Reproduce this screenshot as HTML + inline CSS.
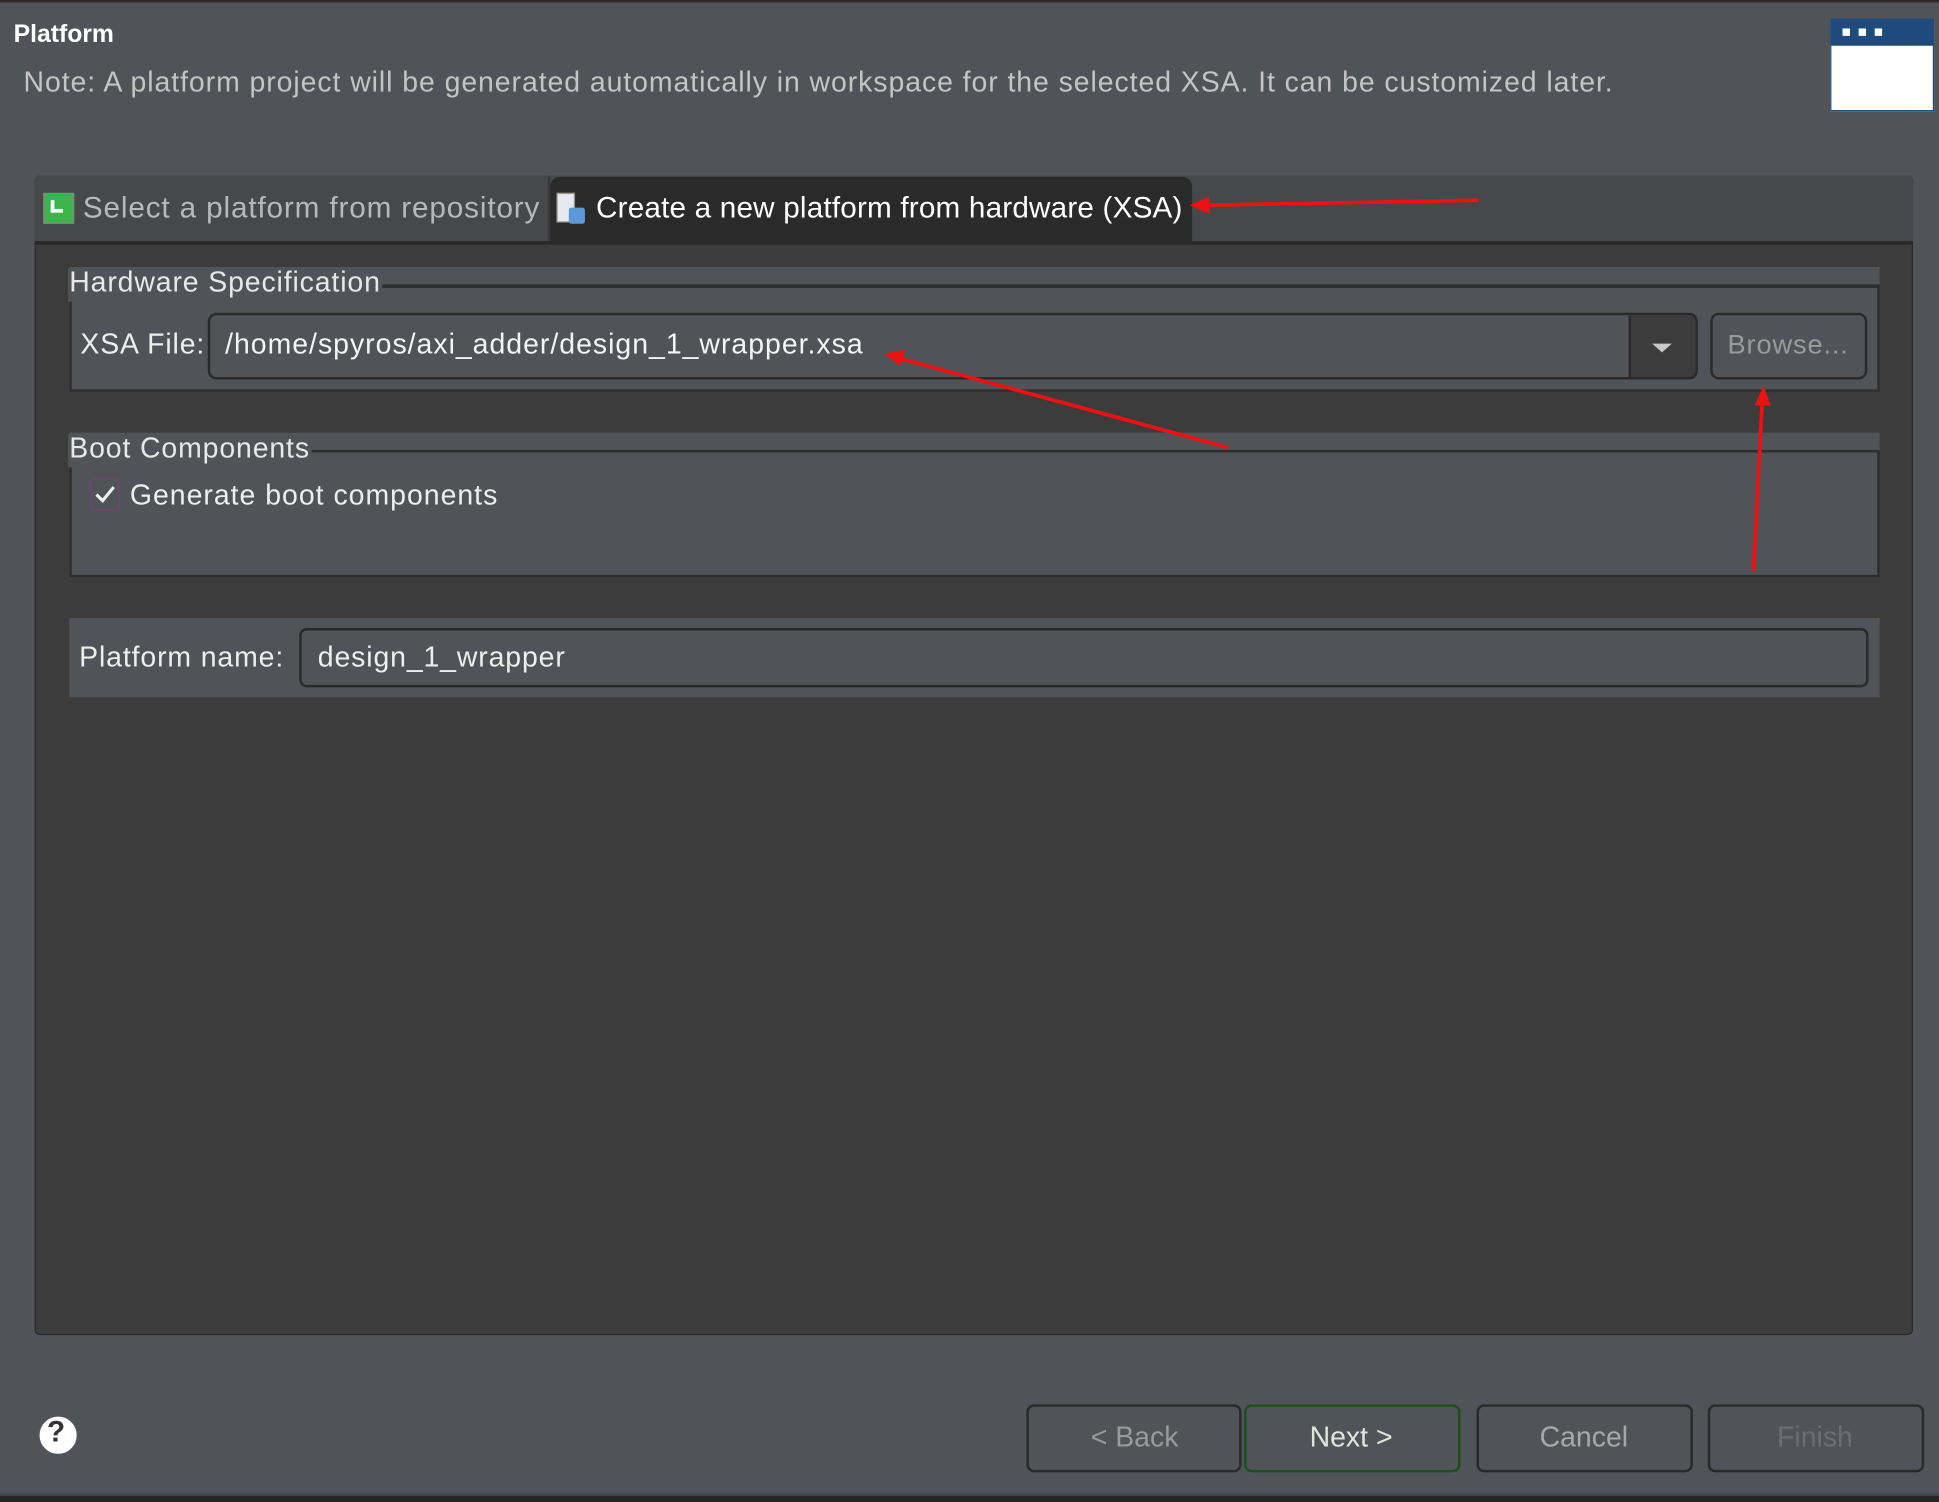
<!DOCTYPE html>
<html><head><meta charset="utf-8"><style>
html,body{margin:0;padding:0;width:1939px;height:1502px;overflow:hidden;background:#505458;}
#w{position:absolute;left:0;top:0;width:1568px;height:1215px;transform:scale(1.23661,1.2362);transform-origin:0 0;background:#505458;font-family:"Liberation Sans",sans-serif;}
.a{position:absolute;}
.t{position:absolute;white-space:nowrap;line-height:1;letter-spacing:0.7px;}
</style></head><body><div id="w">
<div class="a" style="left:0;top:0;width:1568px;height:2px;background:#2b2b2b"></div>
<div class="t" style="left:11px;top:18px;font-size:20px;font-weight:bold;color:#fff;letter-spacing:0">Platform</div>
<div class="t" style="left:19px;top:55px;font-size:23px;color:#c4c4c4;letter-spacing:0.75px">Note: A platform project will be generated automatically in workspace for the selected XSA. It can be customized later.</div>
<div class="a" style="left:1480px;top:15px;width:84px;height:75px;background:#fff;border:1px solid #1e4a7c;box-sizing:border-box"></div>
<div class="a" style="left:1480px;top:15px;width:84px;height:22px;background:#1e4a7c"></div>
<div class="a" style="left:1490px;top:23px;width:6px;height:6px;background:#fff"></div>
<div class="a" style="left:1503px;top:23px;width:6px;height:6px;background:#fff"></div>
<div class="a" style="left:1516px;top:23px;width:6px;height:6px;background:#fff"></div>

<div class="a" style="left:28px;top:142px;width:1519px;height:938px;background:#3c3c3c;border:1px solid #2a2a2a;box-sizing:border-box;border-radius:4px"></div>
<div class="a" style="left:28px;top:142px;width:1519px;height:53px;background:#46484b;border-radius:4px 4px 0 0"></div>
<div class="a" style="left:443px;top:142px;width:2px;height:53px;background:#3a3a3a"></div>
<div class="a" style="left:445px;top:143px;width:519px;height:55px;background:#2a2a2a;border-radius:8px 8px 0 0"></div>
<div class="a" style="left:28px;top:195px;width:1519px;height:3px;background:#2a2a2a"></div>
<div class="a" style="left:35px;top:156px;width:25px;height:25px;background:#39b54a;border:1px solid #888;box-sizing:border-box"></div>
<div class="a" style="left:41px;top:162px;width:10px;height:10px;border-left:3px solid #fff;border-bottom:3px solid #fff;box-sizing:border-box"></div>
<div class="t" style="left:67px;top:157px;font-size:24px;color:#b8b8b8">Select a platform from repository</div>
<div class="a" style="left:450px;top:156px;width:13px;height:22px;background:#e8e8f0;border:1px solid #998"></div>
<div class="a" style="left:460px;top:168px;width:13px;height:13px;background:#5a9ad8;border-radius:2px"></div>
<div class="t" style="left:482px;top:157px;font-size:24px;color:#fff;letter-spacing:0.15px">Create a new platform from hardware (XSA)</div>

<div class="a" style="left:56px;top:216px;width:1464px;height:101px;background:#505458"></div>
<div class="a" style="left:56px;top:230px;width:1464px;height:87px;border:2px solid #2e2e2e;border-top:3px solid #2e2e2e;box-sizing:border-box"></div>
<div class="t" style="left:55px;top:217px;font-size:23px;color:#e8e8e8;background:#505458;padding:0 1px 4px 1px">Hardware Specification</div>
<div class="t" style="left:65px;top:267px;font-size:23px;color:#eee">XSA File:</div>
<div class="a" style="left:168px;top:253px;width:1205px;height:54px;border:2px solid #2a2a2a;border-radius:7px;box-sizing:border-box;background:#505458;overflow:hidden">
 <div class="a" style="right:0;top:0;width:52px;height:50px;background:#3c3c3c;border-left:2px solid #2a2a2a"></div>
 <div class="a" style="right:19px;top:23px;width:0;height:0;border-left:8px solid transparent;border-right:8px solid transparent;border-top:7px solid #c8c8c8"></div>
</div>
<div class="t" style="left:182px;top:267px;font-size:23px;color:#f4f4f4;letter-spacing:0.8px">/home/spyros/axi_adder/design_1_wrapper.xsa</div>
<div class="a" style="left:1383px;top:253px;width:127px;height:54px;border:2px solid #2a2a2a;border-radius:7px;box-sizing:border-box;background:#505458"></div>
<div class="t" style="left:1397px;top:268px;font-size:22px;color:#9a9a9a">Browse...</div>

<div class="a" style="left:56px;top:350px;width:1464px;height:117px;background:#505458"></div>
<div class="a" style="left:56px;top:364px;width:1464px;height:103px;border:2px solid #2e2e2e;box-sizing:border-box"></div>
<div class="t" style="left:55px;top:351px;font-size:23px;color:#e8e8e8;background:#505458;padding:0 1px 4px 1px">Boot Components</div>
<div class="a" style="left:73px;top:387px;width:24px;height:26px;border:1px solid #7a3f7a;border-radius:4px;box-sizing:border-box"></div>
<svg class="a" style="left:73px;top:387px" width="24" height="26"><path d="M5 13 L10 18 L19 7" stroke="#f0f0f0" stroke-width="2.5" fill="none"/></svg>
<div class="t" style="left:105px;top:389px;font-size:23px;color:#eee;letter-spacing:0.8px">Generate boot components</div>

<div class="a" style="left:56px;top:500px;width:1464px;height:64px;background:#505458"></div>
<div class="t" style="left:64px;top:520px;font-size:23px;color:#eee">Platform name:</div>
<div class="a" style="left:242px;top:508px;width:1269px;height:48px;border:2px solid #2a2a2a;border-radius:6px;box-sizing:border-box"></div>
<div class="t" style="left:257px;top:520px;font-size:23px;color:#eee">design_1_wrapper</div>

<svg class="a" style="left:0;top:0" width="1568" height="1215">
<g stroke="#ee1111" stroke-width="3" fill="#ee1111">
<line x1="1196" y1="162" x2="975" y2="166"/><polygon points="962,166 978,159 978,173" stroke="none"/>
<line x1="993" y1="362" x2="728" y2="290"/><polygon points="715,286 732,283 728,296" stroke="none"/>
<line x1="1418" y1="462" x2="1425" y2="325"/><polygon points="1426,312 1419,328 1432,328" stroke="none"/>
</g></svg>

<div class="a" style="left:31px;top:1145px;width:30px;height:30px;border-radius:50%;background:#fff;border:1px solid #556"></div>
<div class="t" style="left:38px;top:1147px;font-size:24px;font-weight:bold;color:#333;letter-spacing:0">?</div>
<div class="a" style="left:830px;top:1136px;width:174px;height:55px;border:2px solid #2a2a2a;border-radius:6px;box-sizing:border-box"></div>
<div class="t" style="left:882px;top:1151px;font-size:23px;color:#9a9a9a;letter-spacing:0">&lt; Back</div>
<div class="a" style="left:1006px;top:1136px;width:175px;height:55px;border:2px solid #1d4f1d;border-radius:6px;box-sizing:border-box"></div>
<div class="t" style="left:1059px;top:1151px;font-size:23px;color:#dde8dd;letter-spacing:0">Next &gt;</div>
<div class="a" style="left:1194px;top:1136px;width:175px;height:55px;border:2px solid #2a2a2a;border-radius:6px;box-sizing:border-box"></div>
<div class="t" style="left:1245px;top:1151px;font-size:23px;color:#a8a8a8;letter-spacing:0">Cancel</div>
<div class="a" style="left:1381px;top:1136px;width:175px;height:55px;border:2px solid #2a2a2a;border-radius:6px;box-sizing:border-box"></div>
<div class="t" style="left:1437px;top:1151px;font-size:23px;color:#6a6e70;letter-spacing:0">Finish</div>
<div class="a" style="left:0;top:1208px;width:1568px;height:2px;background:#45484a"></div>
<div class="a" style="left:0;top:1210px;width:1568px;height:5px;background:#262626"></div>
</div></body></html>
